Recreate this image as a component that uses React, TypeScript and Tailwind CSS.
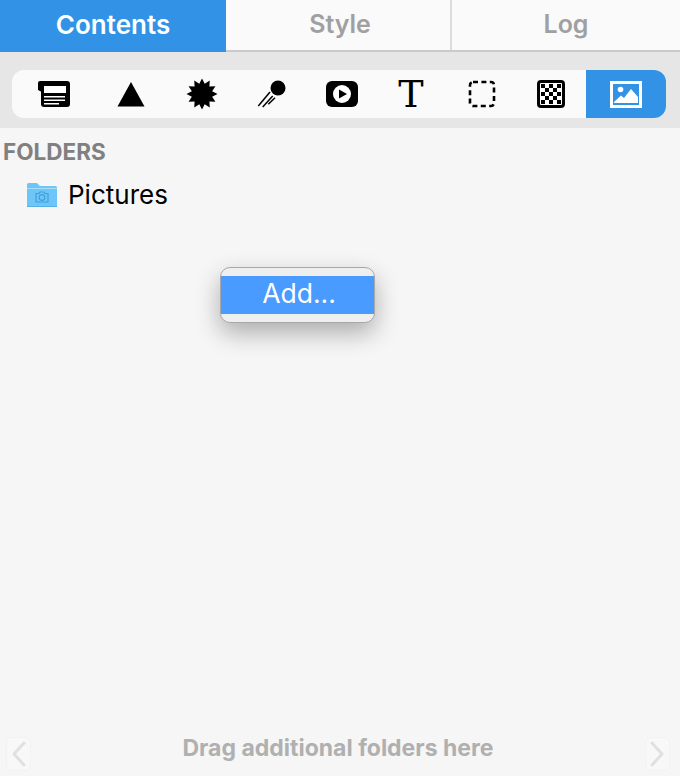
const starPoints = () => {
  const pts: string[] = [];
  for (let i = 0; i < 24; i++) {
    const r = i % 2 === 0 ? 15.5 : 10.5;
    const a = (i * Math.PI) / 12 - Math.PI / 2;
    pts.push(`${(16 + r * Math.cos(a)).toFixed(2)},${(16 + r * Math.sin(a)).toFixed(2)}`);
  }
  return pts.join(' ');
};

const checkerCells = () => {
  const cells: [number, number][] = [];
  for (let row = 0; row < 5; row++) {
    for (let col = 0; col < 5; col++) {
      if ((row + col) % 2 === 0) cells.push([col, row]);
    }
  }
  return cells;
};

const TemplateIcon = () => (
  <svg width="32" height="26" viewBox="0 0 32 26">
    <path d="M2 0H29a3 3 0 0 1 3 3V23a3 3 0 0 1-3 3H6a3 3 0 0 1-3-3V10.5L0 9V2a2 2 0 0 1 2-2Z" fill="#000" />
    <rect x="6" y="5" width="22" height="7" fill="#fff" />
    <rect x="6" y="15" width="21" height="1.5" fill="#fff" />
    <rect x="6" y="18.5" width="21" height="1.5" fill="#fff" />
    <rect x="6" y="22" width="15" height="1.5" fill="#fff" />
  </svg>
);

const TriangleIcon = () => (
  <svg width="28" height="25" viewBox="0 0 28 25">
    <path d="M14 0L27.5 24.5H0.5Z" fill="#000" />
  </svg>
);

const StarIcon = () => (
  <svg width="32" height="32" viewBox="0 0 32 32">
    <polygon points={starPoints()} fill="#000" />
  </svg>
);

const CometIcon = () => (
  <svg width="30" height="28" viewBox="0 0 30 28">
    <circle cx="22" cy="8" r="7.5" fill="#000" />
    <g stroke="#000" strokeWidth="1.5" fill="none">
      <path d="M2.3 26L14 12" />
      <path d="M6.7 27L16.7 16" />
      <path d="M12.3 24.3L19 17.7" />
    </g>
  </svg>
);

const PlayIcon = () => (
  <svg width="32" height="26" viewBox="0 0 32 26">
    <rect width="32" height="26" rx="6" fill="#000" />
    <circle cx="16" cy="13" r="9" fill="#fff" />
    <path d="M13 8.5L21 13L13 17.5Z" fill="#000" />
  </svg>
);

const DashedIcon = () => (
  <svg width="28" height="28" viewBox="0 0 28 28">
    <rect x="2" y="2" width="24" height="24" rx="3" fill="none" stroke="#000" strokeWidth="2.6" strokeDasharray="5 3.4" />
  </svg>
);

const CheckerIcon = () => (
  <svg width="28" height="28" viewBox="0 0 28 28">
    <rect x="1.5" y="1.5" width="25" height="25" rx="2.5" fill="#fff" stroke="#000" strokeWidth="3" />
    {checkerCells().map(([col, row]) => (
      <rect key={`${col}-${row}`} x={4 + col * 4} y={4 + row * 4} width="4" height="4" fill="#000" />
    ))}
  </svg>
);

const ImageIcon = () => (
  <svg width="32" height="27" viewBox="0 0 32 27">
    <rect x="1.5" y="1.5" width="29" height="24" fill="none" stroke="#fff" strokeWidth="3" />
    <circle cx="10.5" cy="8.5" r="2.8" fill="#fff" />
    <path d="M4 21L11 14.5L14 17L21 8L28 16V22H4Z" fill="#fff" />
  </svg>
);

const FolderIcon = () => (
  <svg width="30" height="24" viewBox="0 0 30 24">
    <path d="M1.5 0H10l3 3H28.5A1.5 1.5 0 0 1 30 4.5V22.5A1.5 1.5 0 0 1 28.5 24H1.5A1.5 1.5 0 0 1 0 22.5V1.5A1.5 1.5 0 0 1 1.5 0Z" fill="#6ec6f8" />
    <rect x="0" y="5" width="30" height="1" fill="#a5def9" />
    <rect x="0" y="23" width="30" height="1" fill="#55aee6" />
    <g fill="none" stroke="#3f9fdc" strokeWidth="1.2">
      <path d="M9 10.5H12L13 9H17L18 10.5H21V19H9Z" />
      <circle cx="15" cy="14.5" r="2.8" />
    </g>
  </svg>
);

const tools = [
  { width: 'w-[84px]', icon: <TemplateIcon /> },
  { width: 'w-[70px]', icon: <TriangleIcon /> },
  { width: 'w-[72px]', icon: <StarIcon /> },
  { width: 'w-[66px]', icon: <CometIcon /> },
  { width: 'w-[76px]', icon: <PlayIcon /> },
  { width: 'w-[62px]', icon: <span className="font-['DejaVu_Serif',serif] text-[38px] leading-none text-black">T</span> },
  { width: 'w-[80px]', icon: <DashedIcon /> },
  { width: 'w-[58px] mr-[6px]', icon: <CheckerIcon /> },
];

export default function App() {
  return (
    <div className="relative flex h-[776px] w-[680px] flex-col overflow-hidden bg-[#f6f6f6] font-['Inter',sans-serif]">
      {/* Tabs */}
      <div className="flex h-[52px] border-b-2 border-[#c9cacc] bg-[#fafafa] text-[25px] font-semibold text-[#a0a0a0]">
        <div className="-mb-[2px] flex h-[52px] w-[226px] items-center justify-center bg-[#3293e6] pb-[3px] text-[26px] text-white">Contents</div>
        <div className="flex w-[226px] items-center justify-center border-r-2 border-[#dcdcdf] pl-[4px]">Style</div>
        <div className="flex flex-1 items-center justify-center">Log</div>
      </div>

      {/* Toolbar */}
      <div className="bg-[#e6e6e6] px-3 pb-[10px] pt-[18px]">
        <div className="flex h-[48px] w-[654px] rounded-[12px] bg-[#fafafa]">
          {tools.map((tool, i) => (
            <div key={i} className={`flex items-center justify-center ${tool.width}`}>
              {tool.icon}
            </div>
          ))}
          <div className="flex w-[80px] items-center justify-center rounded-r-[12px] bg-[#3293e6]">
            <ImageIcon />
          </div>
        </div>
      </div>

      {/* Folder list */}
      <div className="flex-1 pl-[3px] pt-[12px]">
        <div className="text-[22.5px] font-bold leading-6 text-[#808080]">FOLDERS</div>
        <div className="mt-[16px] flex items-center pl-[24px]">
          <FolderIcon />
          <span className="ml-[11px] text-[26px] leading-[30px] text-black">Pictures</span>
        </div>
      </div>

      {/* Context menu */}
      <div className="absolute left-[220px] top-[267px] flex h-[56px] w-[155px] flex-col justify-center overflow-hidden rounded-[10px] border border-[#a8a8a8] bg-[#efefef] shadow-[0_10px_24px_rgba(0,0,0,0.3)]">
        <div className="flex h-[38px] items-center justify-center bg-[#4a9bff] pb-[2px] pl-[3px] text-[26.5px] text-white">Add...</div>
      </div>

      {/* Footer */}
      <div className="flex h-[44px] items-center justify-between pl-[6px] pr-[10px]">
        <div className="flex h-[34px] w-[25px] items-center justify-center rounded-[6px] border border-[#f2f2f2] bg-[#f8f8f8]">
          <svg width="14" height="26" viewBox="0 0 14 26" fill="none" stroke="#e0e0e0" strokeWidth="3" strokeLinecap="round" strokeLinejoin="round">
            <path d="M12 2L2 13L12 24" />
          </svg>
        </div>
        <span className="mb-[12px] text-[23px] font-bold text-[#b0b0b0]">Drag additional folders here</span>
        <div className="flex h-[34px] w-[25px] items-center justify-center rounded-[6px] border border-[#f2f2f2] bg-[#f8f8f8]">
          <svg width="14" height="26" viewBox="0 0 14 26" fill="none" stroke="#e0e0e0" strokeWidth="3" strokeLinecap="round" strokeLinejoin="round">
            <path d="M2 2L12 13L2 24" />
          </svg>
        </div>
      </div>
    </div>
  );
}
